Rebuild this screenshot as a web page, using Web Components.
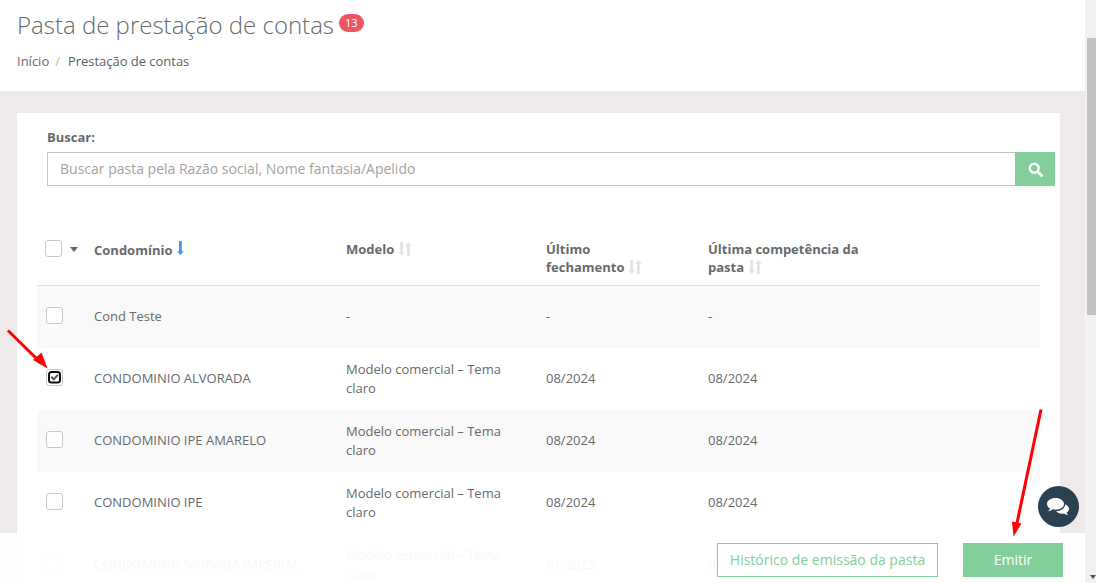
<!DOCTYPE html>
<html lang="pt"><head><meta charset="utf-8"><title>Pasta de prestação de contas</title>
<style>html,body{margin:0;height:100%;overflow:hidden}body{font-family:"Open Sans",sans-serif;color:#676a6c}</style></head>
<body>
<app-shell></app-shell>
<script>
const SORT=`<svg width="14" height="16" viewBox="0 0 14 16" fill="#e3e3e3"><path d="M2.300 1h2.800v10h2L3.700 15 .5 11h1.800zM8.900 15h2.800V5h1.900L10.300 1 7.100 5h1.800z"/></svg>`;
class PageHeading extends HTMLElement{constructor(){super();this.attachShadow({mode:'open'}).innerHTML=`<style>
:host{display:block;background:#fff;height:91px;border-bottom:1px solid #e7e7ec;padding:0 17px;box-sizing:content-box}
.t{display:flex;align-items:flex-start;padding-top:9px;height:32px}
h1{margin:0;font-weight:300;font-size:24px;line-height:32px;color:#676a6c}
.b{margin:5px 0 0 5px;background:#ed5565;color:#fff;font-size:11px;line-height:18px;height:18px;padding:0 6px;border-radius:9px}
nav{margin-top:11px;font-size:13px;line-height:18px;display:flex}
.s{color:#bbb;margin:0 8px 0 6px}.c{color:#5c5f61;letter-spacing:-.03px}
</style><div class="t"><h1>Pasta de prestação de contas</h1><span class="b">13</span></div>
<nav><span>Início</span><span class="s">/</span><span class="c">Prestação de contas</span></nav>`}}
class SearchBox extends HTMLElement{constructor(){super();this.attachShadow({mode:'open'}).innerHTML=`<style>
:host{display:block;padding:15px 5px 0 30px}
label{display:block;font-size:13px;font-weight:700;line-height:18px;margin-bottom:6px;color:#676a6c}
.r{display:flex;height:34px}
input{flex:1;min-width:0;box-sizing:border-box;border:1px solid #c4c4c4;border-right:0;padding:0 12px 2px;font:14px "Open Sans",sans-serif;color:#676a6c;outline:0;background:#fff}
input::placeholder{color:#a3a3a3;opacity:1}
button{width:40px;border:0;padding:0;background:#82cf9c;display:flex;align-items:center;justify-content:center}
</style><label>Buscar:</label><div class="r"><input placeholder="Buscar pasta pela Razão social, Nome fantasia/Apelido">
<button aria-label="Buscar"><svg width="15" height="15" viewBox="0 0 15 15" fill="none" stroke="#fff"><circle cx="6.200" cy="6.200" r="4.500" stroke-width="2.400"/><path d="M9.700 9.700l3.900 3.900" stroke-width="2.800" stroke-linecap="round"/></svg></button></div>`}}
class CheckBox extends HTMLElement{constructor(){super();const on=this.hasAttribute('checked');this.attachShadow({mode:'open'}).innerHTML=`<style>
:host{display:block;box-sizing:border-box;width:17px;height:17px;border:1px solid #c8c8c8;border-radius:3px;background:#fff;position:relative}
svg{position:absolute;left:0;top:0}
</style>${on?`<svg width="15" height="15" viewBox="0 0 15 15" fill="none"><rect x="2" y="2" width="11" height="10.500" rx="2.500" stroke="#111" stroke-width="2"/><path d="M4.300 6.800l2.500 2.600 4-4.500" stroke="#555" stroke-width="2"/></svg>`:''}`}}
class SortHead extends HTMLElement{constructor(){super();const a=this.hasAttribute('active');this.attachShadow({mode:'open'}).innerHTML=`<style>
:host{display:block;font-size:13px;font-weight:700;line-height:18px;color:#676a6c}
svg{vertical-align:-3px;margin-left:4px}
svg.a{vertical-align:-1.500px}
</style><slot></slot>${a?`<svg class="a" width="9" height="16" viewBox="0 0 9 16" fill="#3a9bea"><path d="M3 1h2.800v10.200h2L4.400 15 1 11.200h2z"/></svg>`:SORT}`}}
class DataRow extends HTMLElement{constructor(){super();const c=this.hasAttribute('checked');const model=this.getAttribute('model');this.attachShadow({mode:'open'}).innerHTML=`<style>
:host{display:grid;grid-template-columns:57px 252px 200px 162px 1fr;height:62px;align-items:center;font-size:13px;line-height:19px;color:#676a6c}
:host([odd]){background:#f9f9f9}
.k{padding:0 0 3px 9px}
div{min-width:0}.m{width:170px}
.u{padding-bottom:2px}
</style><div class="k"><check-box ${c?'checked':''}></check-box></div><div class="u">${this.getAttribute('name')}</div><div class="m ${model==='-'?'u':''}">${model}</div><div class="u">${this.getAttribute('last')}</div><div class="u">${this.getAttribute('comp')}</div>`}}
class DataTable extends HTMLElement{constructor(){super();this.attachShadow({mode:'open'}).innerHTML=`<style>
:host{display:block;margin:35px 20px 0 20px}
.h{display:grid;grid-template-columns:57px 252px 200px 162px 1fr;height:64px;border-bottom:1px solid #e0e0e0;box-sizing:content-box}
.h>div{padding-top:19px}
.k{display:flex;align-items:flex-start;gap:8px;padding-left:8px;padding-top:19px!important}
.a{width:0;height:0;border:4px solid transparent;border-top:5px solid #666;border-bottom:0;margin-top:7px}
.w{width:165px}
</style><div class="h"><div class="k"><check-box></check-box><span class="a"></span></div>
<div><sort-head active>Condomínio</sort-head></div><div><sort-head>Modelo</sort-head></div>
<div class="w" style="width:110px"><sort-head>Último fechamento</sort-head></div><div class="w"><sort-head>Última competência da pasta</sort-head></div></div><slot></slot>`}}
class ActionBar extends HTMLElement{constructor(){super();this.attachShadow({mode:'open'}).innerHTML=`<style>
:host{position:absolute;left:0;right:0;bottom:0;height:50px;background:rgba(255,255,255,.95);display:flex;justify-content:flex-end;align-items:flex-start;gap:25px;padding:10px 22px 0 0;box-sizing:border-box}
button{height:34px;font:14px "Open Sans",sans-serif;border:1px solid #82cf9c;padding:0 0 2px;cursor:pointer}
.o{width:221px;background:#fff;color:#82cf9c}.p{width:100px;background:#82cf9c;color:#fff}
</style><button class="o">Histórico de emissão da pasta</button><button class="p">Emitir</button>`}}
class ChatBubble extends HTMLElement{constructor(){super();this.attachShadow({mode:'open'}).innerHTML=`<style>
:host{position:absolute;left:1038px;top:486px;width:41px;height:41px;border-radius:50%;background:#2b4152;display:flex;align-items:center;justify-content:center}
</style><svg width="25" height="20" viewBox="0 0 25 20" fill="#fff" role="img" aria-label="Chat"><path d="M9.500 1C4.800 1 1 3.600 1 6.900c0 1.900 1.200 3.500 3 4.600-.3 1-.9 1.900-1.800 2.700 1.700-.1 3.300-.8 4.400-1.900.9.200 1.900.4 2.900.4 4.700 0 8.500-2.600 8.500-5.800S14.200 1 9.500 1z"/><path d="M19.200 7.200c.1 3.800-4 6.900-9 7.100 1.100 1.500 3.200 2.500 5.600 2.500.9 0 1.700-.1 2.400-.3 1 .9 2.300 1.500 3.800 1.600-.7-.7-1.200-1.500-1.500-2.300 1.500-.9 2.500-2.300 2.500-3.800 0-2-1.600-3.800-3.800-4.800z"/></svg>`}}
class ScrollBar extends HTMLElement{constructor(){super();this.attachShadow({mode:'open'}).innerHTML=`<style>
:host{display:block;position:relative;width:11px;flex:none;background:#f1f1f1}
.t{position:absolute;left:2px;right:0;top:38px;height:277px;background:#c1c1c1}
.d{position:absolute;left:5px;bottom:4px;width:0;height:0;border:3.500px solid transparent;border-top:4px solid #505050;border-bottom:0}
</style><div class="t"></div><div class="d"></div>`}}
class AppShell extends HTMLElement{constructor(){super();this.attachShadow({mode:'open'}).innerHTML=`<style>
:host{display:flex;height:583px;width:1096px;position:relative;overflow:hidden}
.m{flex:1;min-width:0;position:relative;overflow:hidden;background:#eeeaea}
.card{margin:21px 25px 0 17px;background:#fff;height:600px;overflow:hidden}
</style><div class="m"><page-heading></page-heading><div class="card"><search-box></search-box><data-table>
<data-row odd name="Cond Teste" model="-" last="-" comp="-"></data-row>
<data-row checked name="CONDOMINIO ALVORADA" model="Modelo comercial – Tema claro" last="08/2024" comp="08/2024"></data-row>
<data-row odd name="CONDOMINIO IPE AMARELO" model="Modelo comercial – Tema claro" last="08/2024" comp="08/2024"></data-row>
<data-row name="CONDOMINIO IPE" model="Modelo comercial – Tema claro" last="08/2024" comp="08/2024"></data-row>
<data-row odd name="CONDOMINIO MORADA IMPERIAL" model="Modelo comercial – Tema claro" last="01/2023" comp="01/2023"></data-row>
</data-table></div><action-bar></action-bar></div><scroll-bar></scroll-bar>
<chat-bubble></chat-bubble>
<svg style="position:absolute;left:0;top:0;pointer-events:none" width="1096" height="583" fill="red" stroke="none" aria-hidden="true">
<path d="M8 330.500L39 361" stroke="red" stroke-width="3"/><path d="M47.500 368.500L33 360l8.500-7.500z"/>
<path d="M1041 409.500L1017 523" stroke="red" stroke-width="3"/><path d="M1013.500 536.500L1012 521.500l9.500 2z"/></svg>`}}
for(const [n,c] of Object.entries({'page-heading':PageHeading,'search-box':SearchBox,'check-box':CheckBox,'sort-head':SortHead,'data-row':DataRow,'data-table':DataTable,'action-bar':ActionBar,'chat-bubble':ChatBubble,'scroll-bar':ScrollBar,'app-shell':AppShell}))customElements.define(n,c);
</script></body></html>
